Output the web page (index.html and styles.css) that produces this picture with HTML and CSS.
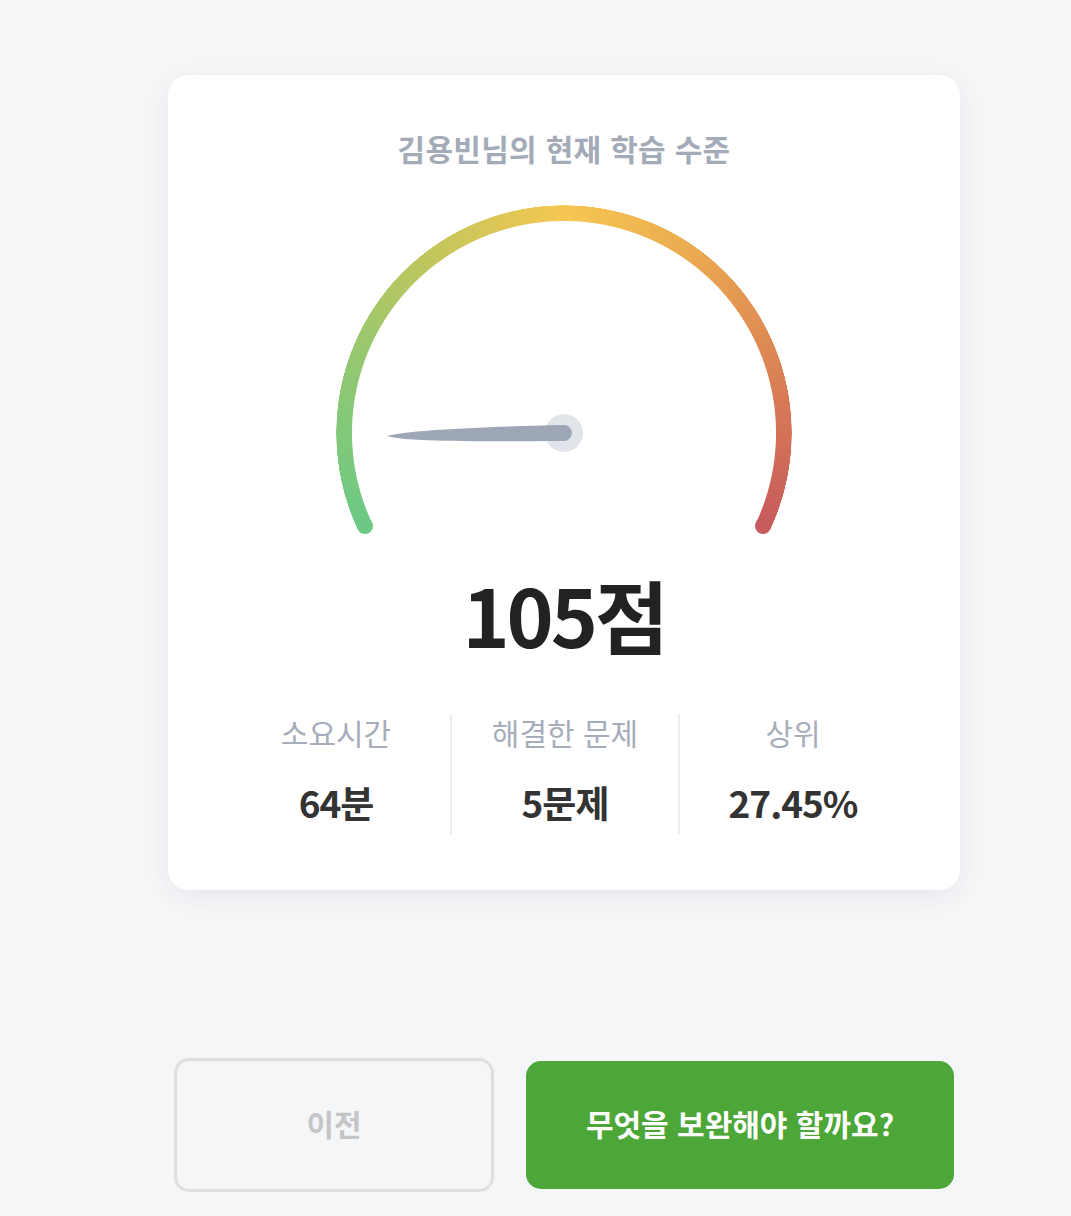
FILE: index.html
```html
<!DOCTYPE html>
<html lang="ko">
<head>
<meta charset="utf-8">
<link rel="stylesheet" href="styles.css">
</head>
<body>
<main class="page">
  <section class="card">
    <h1 class="title">김용빈님의 현재 학습 수준</h1>
    <div class="gauge">
      <div class="arc"></div>
      <span class="cap cap-left"></span>
      <span class="cap cap-right"></span>
      <svg class="needle" width="456" height="335" viewBox="0 0 456 335">
        <circle cx="228" cy="228" r="19" fill="#e1e4e9"/>
        <path d="M51 231 C 70 225, 150 221.5, 228 220 A 8 8 0 0 1 228 236 C 150 236.5, 70 237, 51 231 Z" fill="#9ea7b6"/>
      </svg>
    </div>
    <div class="score">105점</div>
    <div class="stats">
      <div class="stat">
        <div class="stat-label">소요시간</div>
        <div class="stat-value">64분</div>
      </div>
      <div class="stat">
        <div class="stat-label">해결한 문제</div>
        <div class="stat-value">5문제</div>
      </div>
      <div class="stat">
        <div class="stat-label">상위</div>
        <div class="stat-value">27.45%</div>
      </div>
    </div>
  </section>
  <div class="actions">
    <button class="btn btn-prev">이전</button>
    <button class="btn btn-next">무엇을 보완해야 할까요?</button>
  </div>
</main>
</body>
</html>
```
FILE: styles.css
```css
* { box-sizing: border-box; }
html, body {
  margin: 0;
  padding: 0;
  background: #f5f6f8;
  font-family: "Noto Sans CJK KR", "Noto Sans", sans-serif;
}
.page {
  padding-top: 75px;
  padding-left: 168px;
  width: 1071px;
}
.card {
  width: 792px;
  background: #fff;
  border-radius: 20px;
  box-shadow: 0 6px 24px rgba(30, 40, 60, 0.07);
  padding: 56px 54px 56px;
  display: flex;
  flex-direction: column;
  align-items: center;
}
.title {
  margin: 0;
  font-size: 30px;
  line-height: 34px;
  font-weight: 700;
  color: #a3abb8;
  letter-spacing: 0.3px;
}
.gauge {
  position: relative;
  width: 456px;
  height: 335px;
  margin-top: 40px;
}
.arc {
  position: absolute;
  left: 0;
  top: 0;
  width: 456px;
  height: 456px;
  border-radius: 50%;
  background: conic-gradient(from 245deg,
    #6bc984 0deg,
    #8fc873 40deg,
    #c4c65b 80deg,
    #f5c752 115deg,
    #ebaa50 150deg,
    #da8155 190deg,
    #c75a5c 230deg,
    transparent 230deg);
  -webkit-mask: radial-gradient(circle closest-side, transparent 211.5px, #000 212.5px, #000 227.5px, transparent 228px);
  mask: radial-gradient(circle closest-side, transparent 211.5px, #000 212.5px, #000 227.5px, transparent 228px);
}
.cap {
  position: absolute;
  width: 16px;
  height: 16px;
  border-radius: 50%;
  top: 313px;
}
.cap-left { left: 21px; background: #6bc984; }
.cap-right { left: 419px; background: #c75a5c; }
.needle {
  position: absolute;
  left: 0;
  top: 0;
}
.score {
  margin-top: 33px;
  font-size: 80px;
  line-height: 80px;
  font-weight: 700;
  color: #222;
  letter-spacing: -3px;
}
.stats {
  margin-top: 61px;
  display: grid;
  grid-template-columns: repeat(3, 228px);
  width: 684px;
}
.stat {
  display: flex;
  flex-direction: column;
  align-items: center;
  height: 120px;
}
.stat + .stat { border-left: 2px solid #ebecee; }
.stat-label {
  font-size: 30px;
  line-height: 36px;
  color: #a5adba;
  font-weight: 400;
}
.stat-value {
  margin-top: 32px;
  font-size: 37px;
  line-height: 40px;
  font-weight: 700;
  color: #333;
  letter-spacing: -1px;
}
.actions {
  margin-top: 168px;
  display: flex;
  align-items: center;
  gap: 32px;
  padding-left: 6px;
}
.btn {
  font-family: inherit;
  font-weight: 700;
  font-size: 30px;
  border-radius: 15px;
  padding: 0 0 5px;
  cursor: pointer;
}
.btn-prev {
  width: 320px;
  height: 134px;
  border: 3px solid #dedfe1;
  background: transparent;
  color: #c4c5c7;
}
.btn-next {
  width: 428px;
  height: 128px;
  border: none;
  background: #4ca638;
  color: #fff;
}
```
